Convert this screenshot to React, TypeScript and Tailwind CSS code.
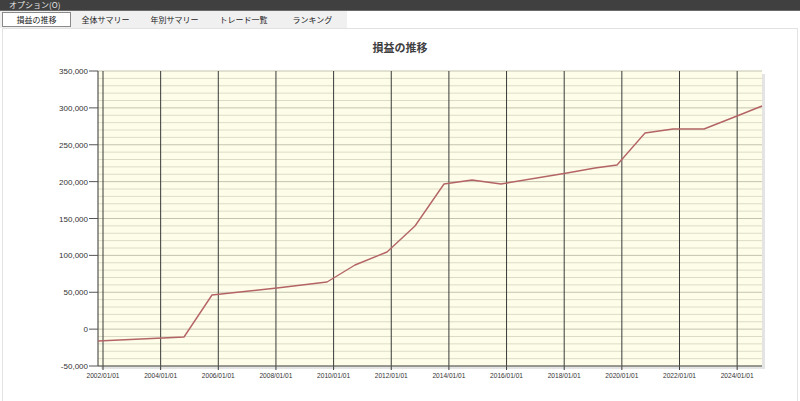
import React from 'react';

// --- chart geometry (page px) ---
const PLOT = { left: 98, right: 762, top: 71, bottom: 366 };
const yFor = (v: number) => PLOT.bottom - ((v + 50000) / 400000) * (PLOT.bottom - PLOT.top);

const tabs = ['損益の推移', '全体サマリー', '年別サマリー', 'トレード一覧', 'ランキング'];

const yMajors = [350000, 300000, 250000, 200000, 150000, 100000, 50000, 0, -50000];
const years = [2002, 2004, 2006, 2008, 2010, 2012, 2014, 2016, 2018, 2020, 2022, 2024];
const xFor = (i: number) => 103 + i * 57.65;

const series: [number, number][] = [
  [98, 341], [184, 337], [212, 295], [277, 288], [327, 282], [355, 265], [387, 252],
  [415, 226], [444, 184], [472, 180], [501, 184], [567, 173], [595, 168], [617, 165],
  [645, 133], [673, 129], [704, 129], [737, 116], [762, 106],
];

function ProfitChart() {
  const minors: number[] = [];
  for (let v = -40000; v < 350000; v += 10000) if (v % 50000 !== 0) minors.push(v);

  return (
    <svg width={800} height={341} viewBox="0 60 800 341" className="block">
      {/* shadow */}
      <rect x={PLOT.left + 3} y={PLOT.top + 3} width={PLOT.right - PLOT.left} height={PLOT.bottom - PLOT.top} fill="#e4e4e4" />
      <rect x={PLOT.left} y={PLOT.top} width={PLOT.right - PLOT.left} height={PLOT.bottom - PLOT.top} fill="#fdfdea" />

      {minors.map((v) => (
        <line key={v} x1={PLOT.left} x2={PLOT.right} y1={yFor(v)} y2={yFor(v)} stroke="#dcdcc6" strokeWidth={1} />
      ))}
      {yMajors.map((v) => (
        <line key={v} x1={PLOT.left} x2={PLOT.right} y1={yFor(v)} y2={yFor(v)} stroke="#c4c4ae" strokeWidth={1} />
      ))}

      {years.map((y, i) => (
        <line key={y} x1={xFor(i)} x2={xFor(i)} y1={PLOT.top} y2={PLOT.bottom + 4} stroke="#3a3a3a" strokeWidth={1} />
      ))}

      {/* axes */}
      <line x1={PLOT.left} x2={PLOT.left} y1={PLOT.top} y2={PLOT.bottom} stroke="#555" strokeWidth={1.2} />
      <line x1={PLOT.left} x2={PLOT.right} y1={PLOT.bottom} y2={PLOT.bottom} stroke="#555" strokeWidth={1.2} />

      {yMajors.map((v) => (
        <g key={v}>
          <line x1={PLOT.left - 9} x2={PLOT.left} y1={yFor(v)} y2={yFor(v)} stroke="#555" strokeWidth={1} />
          <text x={PLOT.left - 10} y={yFor(v) + 3} textAnchor="end" fontSize={8} fill="#333" fontFamily="'Liberation Sans', Arial, sans-serif">
            {v.toLocaleString('en-US')}
          </text>
        </g>
      ))}

      {years.map((y, i) => (
        <text key={y} x={xFor(i)} y={378} textAnchor="middle" fontSize={7.5} textLength={33} lengthAdjust="spacingAndGlyphs" fill="#333" fontFamily="'Liberation Sans', Arial, sans-serif">
          {`${y}/01/01`}
        </text>
      ))}

      <polyline points={series.map((p) => p.join(',')).join(' ')} fill="none" stroke="#b46464" strokeWidth={1.4} strokeLinejoin="round" />
    </svg>
  );
}

export default function App() {
  return (
    <div
      className="w-[800px] h-[401px] overflow-hidden bg-white flex flex-col"
      style={{ fontFamily: "'Noto Sans CJK JP', 'Liberation Sans', sans-serif" }}
    >
      <div className="h-[11px] bg-[#404040] border-b border-[#6a6a6a] flex items-center pl-[9px]">
        <span className="text-[8px] leading-none text-[#e6e6e6]">オプション(O)</span>
      </div>

      <div className="h-[17px] flex items-stretch">
        <div className="flex w-[347px] bg-[#f0f0f0] pl-[2px] pt-[1px]">
          {tabs.map((t, i) => (
            <div
              key={t}
              className={
                i === 0
                  ? 'w-[69px] h-[15px] flex items-center justify-center bg-white border border-[#8a8a8a] text-[8px] text-[#222]'
                  : 'w-[69px] h-[15px] flex items-center justify-center text-[8px] text-[#222]'
              }
            >
              {t}
            </div>
          ))}
        </div>
        <div className="flex-1 bg-white" />
      </div>

      <div className="flex-1 mx-[2px] border-t border-x border-[#e2e2e2] bg-white flex flex-col">
        <div className="h-[31px] flex items-center justify-center pt-[6px]">
          <span className="text-[11px] font-bold text-[#404040]">損益の推移</span>
        </div>
        <div className="-mx-[3px]">
          <ProfitChart />
        </div>
      </div>
    </div>
  );
}
